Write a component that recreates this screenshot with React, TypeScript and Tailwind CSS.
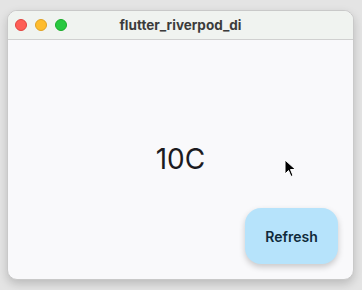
import React from "react";

export default function App() {
  return (
    <div
      className="w-[362px] h-[290px] bg-[#e4e4e4] pt-[10px] pl-[7px] overflow-hidden"
      style={{ fontFamily: "Inter, 'Noto Sans', sans-serif" }}
    >
      <div className="w-[347px] h-[270px] rounded-[10px] bg-[#f9f9fb] border border-[#c9c9c9] shadow-[0_4px_10px_rgba(0,0,0,0.18)] flex flex-col overflow-hidden">
        <div className="h-[29px] bg-[#f0f3f0] border-b border-[#d0d0d0] flex items-center relative shrink-0">
          <div className="flex gap-[8px] pl-[7px]">
            <div className="w-[12px] h-[12px] rounded-full bg-[#fe5f57] border border-[#e0443e]" />
            <div className="w-[12px] h-[12px] rounded-full bg-[#febc2e] border border-[#dea123]" />
            <div className="w-[12px] h-[12px] rounded-full bg-[#28c840] border border-[#1aab29]" />
          </div>
          <div className="absolute inset-0 flex items-center justify-center text-[13.5px] font-bold text-[#3b3b3b]">
            flutter_riverpod_di
          </div>
        </div>
        <div className="flex-1 relative">
          <div className="absolute left-0 right-0 top-[105px] flex justify-center">
            <span className="text-[28px] text-[#1c1b1f] leading-none">10C</span>
          </div>
          <svg className="absolute left-[276px] top-[119px]" width="14" height="20" viewBox="0 0 14 20">
            <path d="M1 1 L1 15 L4.5 11.5 L7 17.5 L9 16.5 L6.5 10.5 L11.5 10.5 Z" fill="#000" stroke="#fff" strokeWidth="1" />
          </svg>
          <button className="absolute left-[237px] top-[168px] w-[93px] h-[56px] rounded-[16px] bg-[#b6e3fb] shadow-[0_3px_6px_rgba(0,0,0,0.2)] text-[14px] font-semibold text-[#0f2a3a]">
            Refresh
          </button>
        </div>
      </div>
    </div>
  );
}
